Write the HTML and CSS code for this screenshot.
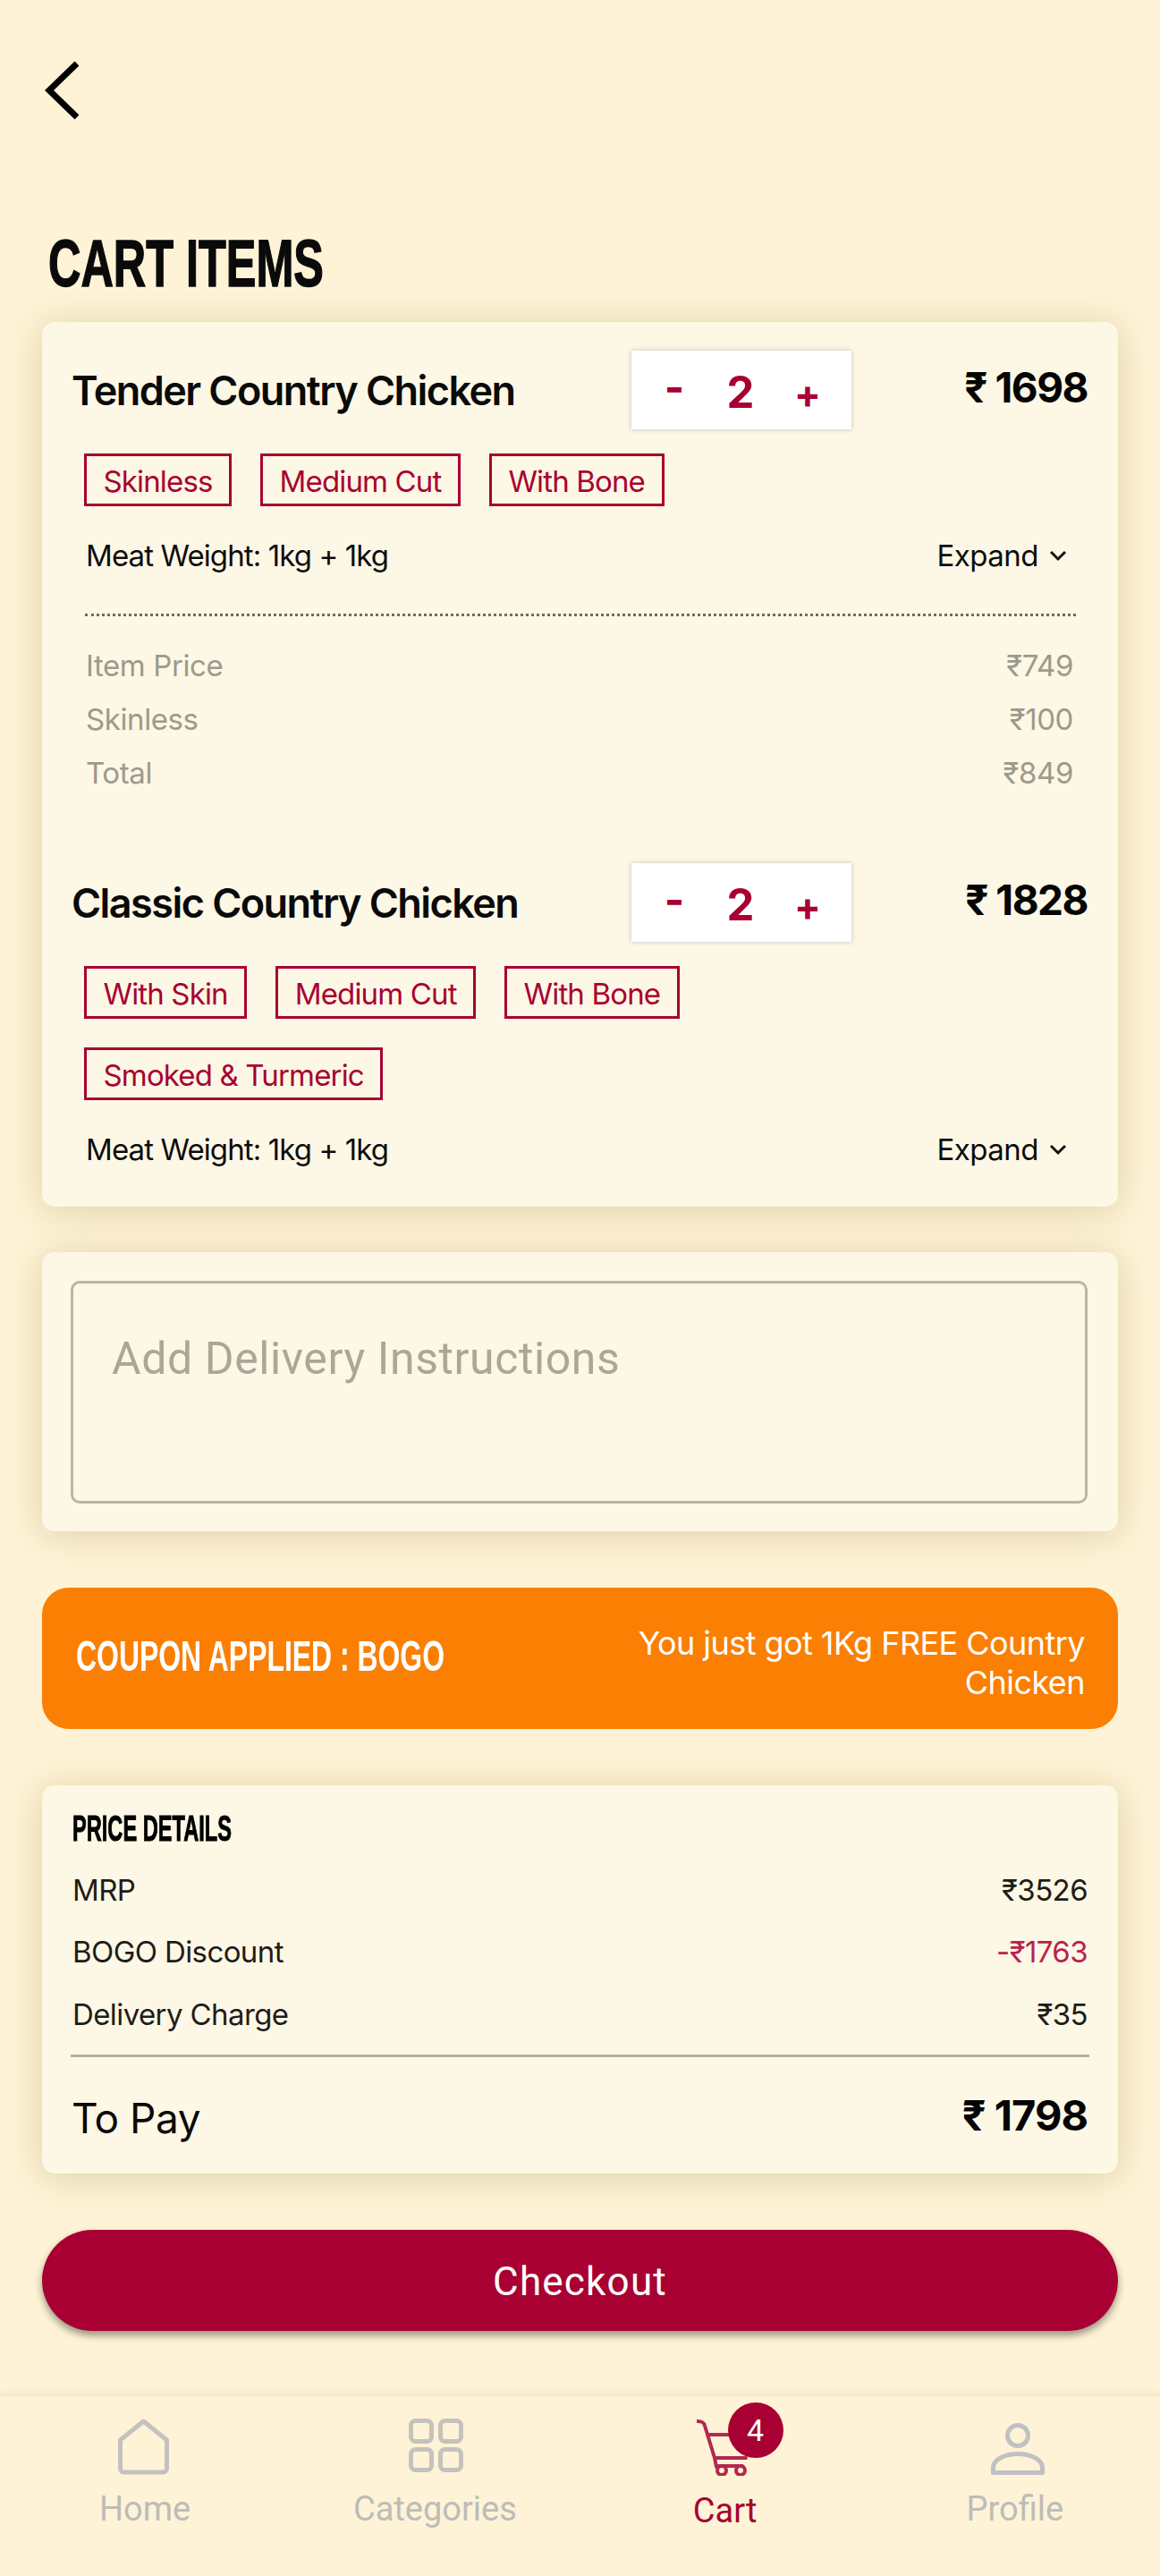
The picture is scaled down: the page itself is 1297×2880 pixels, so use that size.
FILE: index.html
```html
<!DOCTYPE html>
<html lang="en">
<head>
<meta charset="utf-8">
<title>Cart</title>
<link rel="stylesheet" href="styles.css">
</head>
<body>
<div class="screen">
  <main class="content">
    <a class="back" aria-label="Back">
      <svg class="back-icon" viewBox="0 0 40 66"><path d="M36 3 5 33l31 30"/></svg>
    </a>
    <h1 class="page-title"><span>CART ITEMS</span></h1>

    <section class="card items">
      <article class="item">
        <div class="item-head">
          <h2 class="item-name">Tender Country Chicken</h2>
          <div class="qty"><span class="qty-minus">-</span><span class="qty-num">2</span><span class="qty-plus">+</span></div>
          <div class="item-price">₹ 1698</div>
        </div>
        <div class="tags">
          <span class="tag">Skinless</span><span class="tag">Medium Cut</span><span class="tag">With Bone</span>
        </div>
        <div class="meta">
          <span class="weight">Meat Weight: 1kg + 1kg</span>
          <span class="expand">Expand <svg class="chev" viewBox="0 0 20 13"><path d="M2 2l8 8 8-8"/></svg></span>
        </div>
        <div class="dots"></div>
        <div class="breakdown"><span>Item Price</span><span>₹749</span></div>
        <div class="breakdown"><span>Skinless</span><span>₹100</span></div>
        <div class="breakdown"><span>Total</span><span>₹849</span></div>
      </article>

      <article class="item item-next">
        <div class="item-head">
          <h2 class="item-name">Classic Country Chicken</h2>
          <div class="qty"><span class="qty-minus">-</span><span class="qty-num">2</span><span class="qty-plus">+</span></div>
          <div class="item-price">₹ 1828</div>
        </div>
        <div class="tags">
          <span class="tag">With Skin</span><span class="tag">Medium Cut</span><span class="tag">With Bone</span><span class="tag">Smoked &amp; Turmeric</span>
        </div>
        <div class="meta">
          <span class="weight">Meat Weight: 1kg + 1kg</span>
          <span class="expand">Expand <svg class="chev" viewBox="0 0 20 13"><path d="M2 2l8 8 8-8"/></svg></span>
        </div>
      </article>
    </section>

    <section class="card notes">
      <div class="notes-box">Add Delivery Instructions</div>
    </section>

    <section class="coupon">
      <div class="coupon-code"><span>COUPON APPLIED : BOGO</span></div>
      <div class="coupon-msg">You just got 1Kg FREE Country<br>Chicken</div>
    </section>

    <section class="card prices">
      <h3 class="prices-title"><span>PRICE DETAILS</span></h3>
      <div class="price-row"><span>MRP</span><span>₹3526</span></div>
      <div class="price-row"><span>BOGO Discount</span><span class="discount">-₹1763</span></div>
      <div class="price-row"><span>Delivery Charge</span><span>₹35</span></div>
      <div class="rule"></div>
      <div class="pay-row"><span class="pay-label">To Pay</span><span class="pay-value">₹ 1798</span></div>
    </section>

    <button class="checkout">Checkout</button>
  </main>

  <nav class="tabbar">
    <div class="tab">
      <svg class="tab-icon" viewBox="0 0 64 64"><path d="M30.5 3 56.5 24V56a4 4 0 0 1-4 4H8.500a4 4 0 0 1-4-4V24Z"/></svg>
      <span class="tab-label">Home</span>
    </div>
    <div class="tab">
      <svg class="tab-icon" viewBox="0 0 64 64">
        <rect x="5.500" y="2.500" width="23" height="23" rx="5"/><rect x="38.500" y="2.500" width="23" height="23" rx="5"/>
        <rect x="5.500" y="34.500" width="23" height="23" rx="5"/><rect x="38.500" y="34.500" width="23" height="23" rx="5"/>
      </svg>
      <span class="tab-label">Categories</span>
    </div>
    <div class="tab tab-active">
      <div class="cart-wrap">
        <svg class="tab-icon cart-icon" viewBox="0 0 64 64">
          <path d="M1 3c5 0 7 1 8 5l11 36 2 10M13 18h30M20 44h35M23 53h28"/>
          <circle cx="28" cy="58" r="5"/><circle cx="49" cy="58" r="5"/>
        </svg>
        <span class="badge">4</span>
      </div>
      <span class="tab-label">Cart</span>
    </div>
    <div class="tab">
      <svg class="tab-icon profile-icon" viewBox="0 0 70 64">
        <circle cx="38" cy="19" r="11.500"/>
        <path d="M10.500 60.500V55C10.500 45 25 39.500 38 39.500S65.500 45 65.500 55v5.500Z"/>
      </svg>
      <span class="tab-label">Profile</span>
    </div>
  </nav>
</div>
</body>
</html>
```

FILE: styles.css
```css
* { box-sizing: border-box; }
html, body { margin: 0; padding: 0; }
body {
  background: #fef3d6;
  color: #0d0d0d;
  font-family: "Inter", "Noto Sans", sans-serif;
}
.screen { display: flex; flex-direction: column; min-height: 2880px; }
.content { padding: 68px 47px 0; display: flex; flex-direction: column; }

.back { display: block; width: 40px; height: 66px; margin-left: 3px; }
.back-icon { display: block; width: 40px; height: 66px; fill: none; stroke: #000; stroke-width: 7; }

.page-title {
  margin: 120px 0 26px 7px;
  height: 80px;
  font: 700 75px/80px "Liberation Sans", sans-serif;
  color: #0a0a0a;
  white-space: nowrap;
}
.page-title span {
  display: inline-block;
  transform: scaleX(.672);
  transform-origin: left center;
  -webkit-text-stroke: 1.5px #0a0a0a;
}

.card {
  background: #fdf7e5;
  border-radius: 14px;
  box-shadow: 0 4px 38px rgba(130, 110, 40, .26);
}
.items { padding: 32px 34px 34px; }
.item-next { margin-top: 71px; }
.item-head { display: grid; grid-template-columns: 625px 246px 1fr; align-items: center; height: 88px; }
.item-name { margin: 0 0 0 -1px; font-size: 45px; font-weight: 600; letter-spacing: -1.55px; white-space: nowrap; color: #0a0a0a; }
.qty {
  display: grid;
  grid-template-columns: 96px 52px 98px;
  align-items: center;
  justify-items: center;
  height: 88px;
  background: #fff;
  box-shadow: 0 0 5px rgba(110, 110, 140, .4);
  color: #a80032;
  font-weight: 700;
}
.qty-minus { font-size: 48px; line-height: 1; margin-top: -6px; }
.qty-num { font-size: 49px; line-height: 1; margin-top: 4px; }
.qty-plus { font-size: 44px; line-height: 1; margin-top: 8px; }
.item-price { text-align: right; font-size: 46px; font-weight: 700; letter-spacing: -1.5px; margin-top: -6px; white-space: nowrap; color: #050505; }

.tags { display: flex; flex-wrap: wrap; gap: 32px; max-width: 800px; margin: 27px 0 0 13px; }
.tag {
  display: flex;
  align-items: center;
  height: 59px;
  padding: 2px 18.500px 0;
  border: 3px solid #a80032;
  color: #a80032;
  font-size: 33px;
  letter-spacing: -.85px;
  white-space: nowrap;
}
.meta {
  display: flex;
  justify-content: space-between;
  align-items: center;
  height: 60px;
  margin-top: 25px;
  padding: 0 23px 0 15px;
  font-size: 33px;
  letter-spacing: -.5px;
  color: #0d0d0d;
}
.weight { letter-spacing: -.9px; }
.expand { display: flex; align-items: center; gap: 12px; }
.chev { width: 20px; height: 13px; fill: none; stroke: #111; stroke-width: 3; }
.dots { margin: 35px 13px 0 14px; height: 3px; border-top: 3px dotted #6e6c60; }
.breakdown {
  display: flex;
  justify-content: space-between;
  align-items: center;
  height: 60px;
  padding: 0 16px 0 15px;
  font-size: 33px;
  letter-spacing: -.4px;
  color: #9c9a8c;
}
.dots + .breakdown { margin-top: 25px; }

.notes { margin-top: 51px; padding: 32px 34px 31px 32px; }
.notes-box {
  height: 249px;
  padding: 52px 0 0 43px;
  border: 3px solid #bab6a4;
  border-radius: 10px;
  font: 400 50px/64px "Roboto", sans-serif;
  letter-spacing: .6px;
  color: #a9a798;
}

.coupon {
  display: flex;
  justify-content: space-between;
  align-items: center;
  height: 158px;
  margin-top: 63px;
  padding: 0 37px 0 38px;
  background: #fa7f03;
  border-radius: 30px;
  color: #fff;
}
.coupon-code { width: 440px; font: 700 48px/60px "Liberation Sans", sans-serif; margin-top: -4px; white-space: nowrap; }
.coupon-code span { display: inline-block; transform: scaleX(.665); transform-origin: left center; }
.coupon-msg { font-size: 36px; line-height: 44px; text-align: right; letter-spacing: -.55px; margin-top: 10px; }

.prices { margin-top: 63px; height: 434px; padding: 28px 34px 0; }
.prices-title {
  margin: 0;
  height: 40px;
  font: 700 40px/40px "Liberation Sans", sans-serif;
  color: #000;
  white-space: nowrap;
}
.prices-title span {
  display: inline-block;
  transform: scaleX(.59);
  transform-origin: left center;
  -webkit-text-stroke: 1px #000;
}
.price-row {
  display: flex;
  justify-content: space-between;
  align-items: center;
  height: 69.500px;
  font-size: 33px;
  letter-spacing: -.6px;
  color: #1d1d18;
}
.prices-title + .price-row { margin-top: 14px; }
.discount { color: #b8234f; }
.rule { height: 3px; margin: 10px -2px 0; background: #b0aea5; }
.pay-row { display: flex; justify-content: space-between; align-items: center; height: 75px; margin-top: 31px; margin-left: -1px; }
.pay-label { font-size: 46px; letter-spacing: -.5px; color: #0a0a0a; }
.pay-value { font-size: 47px; font-weight: 700; letter-spacing: -1px; margin-top: -8px; color: #050505; }

.checkout {
  display: block;
  width: 100%;
  height: 113px;
  margin-top: 63px;
  padding: 3px 0 0;
  border: 0;
  border-radius: 57px;
  background: #a80032;
  color: #fff;
  font: 400 44px/1 "Roboto", sans-serif;
  letter-spacing: 1.2px;
  box-shadow: 0 5px 9px rgba(0, 0, 0, .4);
}

.tabbar {
  display: grid;
  grid-template-columns: repeat(4, 1fr);
  flex: 1;
  margin-top: 73px;
  padding-top: 25px;
  background: #fef3d6;
  box-shadow: 0 -3px 10px rgba(110, 90, 30, .09);
  border-radius: 0 0 12px 12px;
}
.tab { display: flex; flex-direction: column; align-items: center; }
.tab-icon { display: block; width: 64px; height: 64px; fill: none; stroke: #c4c2bc; stroke-width: 5; stroke-linejoin: round; filter: blur(.6px); }
.profile-icon { width: 70px; stroke: #bfc1c2; }
.tab-label { margin-top: 15px; font: 400 38px/44px "Roboto", sans-serif; color: #bdbcb8; }
.tab-active .tab-label { color: #a80032; margin-top: 17px; }
.cart-wrap { position: relative; width: 64px; height: 64px; }
.cart-icon { stroke: #b3284f; stroke-width: 4; stroke-linecap: round; }
.badge {
  position: absolute;
  left: 35px;
  top: -18px;
  width: 62px;
  height: 62px;
  border-radius: 50%;
  background: #a80032;
  color: #fff;
  font: 400 34px/62px "Roboto", sans-serif;
  text-align: center;
}
```
